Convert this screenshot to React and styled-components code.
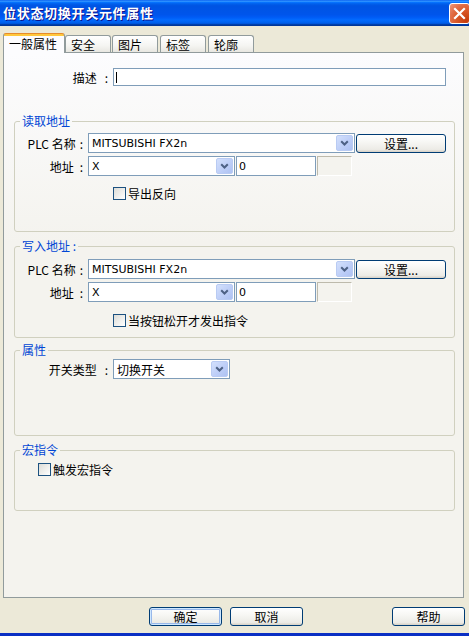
import React from 'react';
import styled, { createGlobalStyle } from 'styled-components';

const GlobalStyle = createGlobalStyle`
  html, body { margin: 0; padding: 0; }
  body {
    width: 469px; height: 636px; overflow: hidden;
    background: #ECE9D8;
    font-family: "Noto Sans CJK SC", sans-serif;
    font-size: 12px; color: #000;
  }
  #root { width: 469px; height: 636px; }
`;

const CJK = `"Noto Sans CJK SC", sans-serif`;
const LATIN = `"DejaVu Sans", "Noto Sans CJK SC", sans-serif`;

const Window = styled.div`
  width: 469px; height: 636px; box-sizing: border-box;
  display: flex; flex-direction: column;
  background: #ECE9D8;
  border-bottom: 3px solid #0A2FC4;
  overflow: hidden;
`;

const TitleBar = styled.div`
  height: 26px; flex-shrink: 0;
  display: flex; align-items: flex-start; justify-content: space-between;
  background: linear-gradient(to bottom,
    #0058EE 0%, #3593FF 4%, #288EFF 6%, #127DFF 8%, #036FFC 10%,
    #0262EE 14%, #0057E5 20%, #0054E3 24%, #0055EB 56%, #005BF5 66%,
    #026AFE 76%, #0062EF 86%, #0052D6 92%, #0040AB 94%, #003092 100%);
`;

const TitleText = styled.div`
  padding-left: 3px;
  line-height: 26px;
  color: #fff;
  font-family: ${CJK};
  font-weight: bold;
  font-size: 13px;
  letter-spacing: 0.7px;
  text-shadow: 1px 1px #0F1089;
`;

const CloseBtn = styled.div`
  width: 21px; height: 21px; box-sizing: border-box;
  margin-top: 3px; margin-right: -1px;
  border: 1px solid #fff; border-radius: 3px;
  background: radial-gradient(circle at 85% 85%, #C43C0C 0%, #DA5A2A 45%, #E2704A 70%, #EE9A7E 100%);
  display: flex; align-items: center; justify-content: center;
`;

const Body = styled.div`
  flex: 1; display: flex; flex-direction: column;
  padding-top: 7px;
`;

const TabBar = styled.div`
  height: 20px; display: flex; align-items: flex-end;
  padding-left: 3px; position: relative; z-index: 2;
`;

const Tab = styled.div`
  box-sizing: border-box;
  width: ${p => p.$w}px;
  margin-left: ${p => p.$ml || 0}px;
  border: 1px solid #919B9C; border-bottom: none;
  border-radius: 3px 3px 0 0;
  padding-left: 5px;
  font-family: ${CJK}; font-size: 12px; white-space: nowrap;
  ${p => p.$active ? `
    height: 20px;
    border-top-color: #E68B2C;
    background: linear-gradient(#FFC73C 0 2px, #FCFCFE 2px);
    line-height: 19px;
  ` : `
    height: 17px; margin-bottom: 1px;
    padding-top: 1px;
    line-height: 15px;
    background: linear-gradient(#FFFFFF, #F5F5F2 60%, #E8E7E1);
  `}
`;

const Panel = styled.div`
  position: relative; z-index: 1;
  margin-top: -1px; margin-left: 3px;
  width: 461px; height: 546px; box-sizing: border-box;
  border: 1px solid #919B9C;
  background: linear-gradient(to bottom, #FCFCFE 0px, #F4F3EE 190px, #F4F3EE 100%);
  display: flex; flex-direction: column;
  padding: 0 8px 0 10px;
`;

const Row = styled.div`
  display: flex; align-items: center;
  height: ${p => p.$h || 20}px;
  margin-top: ${p => p.$mt || 0}px;
`;

const Label = styled.div`
  width: ${p => p.$w}px; flex-shrink: 0;
  margin-right: 5px;
  text-align: right; white-space: pre;
  font-family: ${CJK}; font-size: 12px;
`;

const Colon = styled.span`
  margin-left: ${p => p.$gap || 6}px;
`;

const TextBox = styled.div`
  box-sizing: border-box;
  width: ${p => p.$w}px; height: ${p => p.$h || 20}px;
  margin-right: ${p => p.$mr || 0}px;
  border: 1px solid #7F9DB9; background: #fff;
  display: flex; align-items: center;
  padding-left: 2px;
  font-family: ${LATIN}; font-size: 11px;
`;

const Caret = styled.div`
  width: 1px; height: 11px; background: #000; margin-left: 0px;
`;

const DisabledBox = styled.div`
  box-sizing: border-box;
  width: ${p => p.$w}px; height: 20px;
  border: 1px solid; border-color: #BDBAAC #FFFFFF #FFFFFF #BDBAAC;
  background: #F4F3EE;
`;

const Combo = styled.div`
  box-sizing: border-box;
  width: ${p => p.$w}px; height: 20px;
  margin-right: ${p => p.$mr || 0}px;
  border: 1px solid #7F9DB9; background: #fff;
  display: flex; align-items: center;
  padding: 1px;
`;

const ComboValue = styled.div`
  flex: 1; padding-left: 2px; white-space: nowrap; overflow: hidden;
  font-family: ${p => p.$cjk ? CJK : LATIN};
  font-size: ${p => p.$cjk ? 12 : 11}px;
`;

const DropBtn = styled.div`
  width: 17px; height: 16px; box-sizing: border-box; flex-shrink: 0;
  border: 1px solid #B9CBF3; border-radius: 2px;
  background: linear-gradient(135deg, #D3E0FC 0%, #BCCDF7 60%, #AEC2F2 100%);
  display: flex; align-items: center; justify-content: center;
`;

const Button = styled.div`
  box-sizing: border-box;
  width: ${p => p.$w || 73}px; height: 19px;
  margin-left: ${p => p.$ml || 0}px;
  border: 1px solid #003C74; border-radius: 3px;
  background: linear-gradient(to bottom, #FFFFFF 0%, #F7F7F4 40%, #ECEBE6 85%, #D6D0C5 100%);
  display: flex; align-items: center; justify-content: center;
  font-family: ${CJK}; font-size: 12px;
  ${p => p.$default && `box-shadow: inset 0 0 0 1px #CEE7FF, inset 0 0 0 2px #98B8EA;`}
`;

const Group = styled.fieldset`
  margin: ${p => p.$mt}px 0 0 0; padding: 0;
  height: ${p => p.$h}px; box-sizing: border-box;
  border: 1px solid #D0D0BF; border-radius: 3px;
  min-width: 0;
`;

const Legend = styled.legend`
  margin-left: 5px; padding: 0 2px;
  font-family: ${CJK}; font-size: 12px; line-height: 14px;
  color: #0046D5; white-space: pre;
`;

const GroupBody = styled.div`
  display: flex; flex-direction: column;
  padding-top: ${p => p.$pt}px;
`;

const CheckRow = styled.div`
  display: flex; align-items: center;
  height: 13px;
  margin-left: ${p => p.$ml}px;
  margin-top: ${p => p.$mt || 0}px;
  font-family: ${CJK}; font-size: 12px; white-space: nowrap;
`;

const CheckBox = styled.div`
  width: 13px; height: 13px; box-sizing: border-box; flex-shrink: 0;
  border: 1px solid #1C5180;
  background: linear-gradient(135deg, #DCDCD7 0%, #FFFFFF 100%);
  margin-right: 2px;
`;

const ButtonBar = styled.div`
  display: flex; margin-top: 9px;
  padding-left: 149px; padding-right: 4px;
`;

const Spacer = styled.div` flex: 1; `;

const Chevron = () => (
  <svg width="9" height="6" viewBox="0 0 9 6">
    <path d="M1.2 1.2 L4.5 4.5 L7.8 1.2" fill="none" stroke="#4D6185" strokeWidth="2" />
  </svg>
);

const CloseX = () => (
  <svg width="13" height="13" viewBox="0 0 13 13">
    <path d="M2 2 L11 11 M11 2 L2 11" stroke="#fff" strokeWidth="2.2" strokeLinecap="square" />
  </svg>
);

const ComboBox = ({ w, value, cjk, mr }) => (
  <Combo $w={w} $mr={mr}>
    <ComboValue $cjk={cjk}>{value}</ComboValue>
    <DropBtn><Chevron /></DropBtn>
  </Combo>
);

const Field = ({ w, text, gap }) => (
  <Label $w={w}>{text}<Colon $gap={gap}>:</Colon></Label>
);

const AddressGroup = ({ title, mt, h, pt, checkText, checkMt }) => (
  <Group $mt={mt} $h={h}>
    <Legend>{title}</Legend>
    <GroupBody $pt={pt}>
      <Row>
        <Field w={68} text="PLC 名称" gap={4} />
        <ComboBox w={267} mr={1} value="MITSUBISHI FX2n" />
        <Button $w={90}>设置...</Button>
      </Row>
      <Row $mt={3}>
        <Field w={68} text="地址" gap={6} />
        <ComboBox w={147} mr={1} value="X" />
        <TextBox $w={80} $mr={1}>0</TextBox>
        <DisabledBox $w={35} />
      </Row>
      <CheckRow $ml={98} $mt={checkMt}>
        <CheckBox />{checkText}
      </CheckRow>
    </GroupBody>
  </Group>
);

export default function App() {
  const tabs = [
    { t: '安全', w: 46, ml: 0 },
    { t: '图片', w: 46, ml: 1 },
    { t: '标签', w: 46, ml: 2 },
    { t: '轮廓', w: 46, ml: 2 },
  ];
  return (
    <>
      <GlobalStyle />
      <Window>
        <TitleBar>
          <TitleText>位状态切换开关元件属性</TitleText>
          <CloseBtn><CloseX /></CloseBtn>
        </TitleBar>
        <Body>
          <TabBar>
            <Tab $active $w={62}>一般属性</Tab>
            {tabs.map(x => <Tab key={x.t} $w={x.w} $ml={x.ml}>{x.t}</Tab>)}
          </TabBar>
          <Panel>
            <Row $h={18} $mt={15}>
              <Field w={94} text="描述" gap={8} />
              <TextBox $w={333} $h={18}><Caret /></TextBox>
            </Row>

            <AddressGroup title="读取地址" mt={28} h={118} pt={5} checkText="导出反向" checkMt={11} />
            <AddressGroup title="写入地址 :" mt={7} h={99} pt={6} checkText="当按钮松开才发出指令" checkMt={12} />

            <Group $mt={5} $h={93}>
              <Legend>属性</Legend>
              <GroupBody $pt={2}>
                <Row>
                  <Field w={93} text="开关类型" gap={8} />
                  <ComboBox w={117} value="切换开关" cjk />
                </Row>
              </GroupBody>
            </Group>

            <Group $mt={7} $h={68}>
              <Legend>宏指令</Legend>
              <GroupBody $pt={6}>
                <CheckRow $ml={23}>
                  <CheckBox />触发宏指令
                </CheckRow>
              </GroupBody>
            </Group>
          </Panel>
          <ButtonBar>
            <Button $default>确定</Button>
            <Button $ml={8}>取消</Button>
            <Spacer />
            <Button>帮助</Button>
          </ButtonBar>
        </Body>
      </Window>
    </>
  );
}
